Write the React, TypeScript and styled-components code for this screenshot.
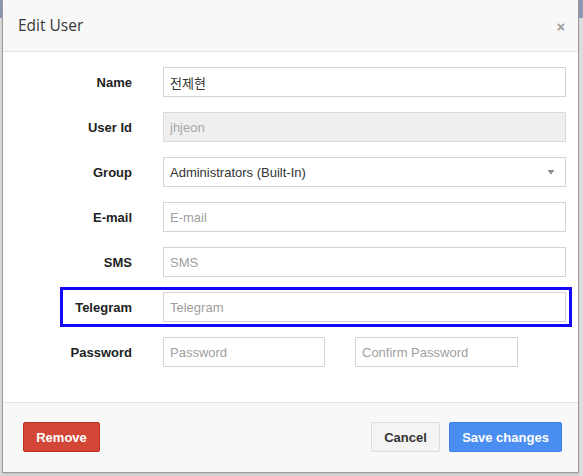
import React from "react";
import styled, { createGlobalStyle } from "styled-components";

const GlobalStyle = createGlobalStyle`
  html, body { margin: 0; padding: 0; }
  body {
    background: #e4e4e4;
    font-family: "Liberation Sans", Arial, sans-serif;
    font-size: 13px;
    color: #333;
  }
  * { box-sizing: border-box; }
`;

const Page = styled.div`
  width: 583px;
  height: 476px;
  padding-left: 2px;
  background: linear-gradient(to bottom, #8e9bb5 0, #8e9bb5 18px, #dedede 18px);
  overflow: hidden;
`;

const Dialog = styled.div`
  width: 577px;
  height: 473px;
  background: #fff;
  border: 1px solid #9c9c9c;
  border-top: none;
  display: flex;
  flex-direction: column;
  box-shadow: 0 2px 3px rgba(0, 0, 0, 0.12);
`;

const Header = styled.div`
  height: 52px;
  flex: none;
  background: #f8f8f8;
  border-bottom: 1px solid #e3e3e3;
  display: flex;
  align-items: center;
  justify-content: space-between;
  padding: 0 13px 2px 15px;
`;

const Title = styled.h4`
  margin: 0;
  font-family: "Open Sans", "Liberation Sans", sans-serif;
  font-size: 15.5px;
  font-weight: 500;
  color: #383838;
`;

const Close = styled.button`
  border: none;
  background: none;
  padding: 0;
  margin-top: 4px;
  font-family: "Liberation Sans", Arial, sans-serif;
  font-size: 14px;
  font-weight: bold;
  line-height: 1;
  color: #9a9a9a;
  cursor: pointer;
`;

const Body = styled.div`
  flex: 1;
  padding: 13px 9px 33px 60px;
  display: flex;
  flex-direction: column;
  gap: 11px;
`;

const Row = styled.div<{ $highlight?: boolean }>`
  display: flex;
  align-items: center;
  height: 34px;
  padding: 2px 3px 2px 0;
  outline: ${(p) => (p.$highlight ? "3px solid #1408f6" : "none")};
`;

const Label = styled.label`
  width: 69px;
  flex: none;
  text-align: right;
  font-weight: bold;
  font-size: 13px;
  color: #222;
  margin-right: 31px;
  white-space: nowrap;
`;

const Field = styled.div`
  flex: 1;
  display: flex;
  gap: 30px;
`;

const Input = styled.input<{ $width?: number }>`
  height: 30px;
  width: ${(p) => (p.$width ? `${p.$width}px` : "100%")};
  flex: ${(p) => (p.$width ? "none" : "1")};
  border: 1px solid #d4d4d4;
  border-radius: 0;
  padding: 0 6px;
  font-family: "Liberation Sans", "Noto Sans CJK KR", Arial, sans-serif;
  font-size: 13px;
  color: #333;
  background: #fff;
  outline: none;
  &::placeholder { color: #a0a0a0; }
  &:disabled {
    background: #efefef;
    color: #a8a8a8;
    border-color: #dadada;
  }
`;

const Select = styled.div`
  flex: 1;
  height: 30px;
  border: 1px solid #d4d4d4;
  display: flex;
  align-items: center;
  justify-content: space-between;
  padding: 0 10px 0 6px;
  font-size: 13px;
  color: #333;
`;

const Footer = styled.div`
  flex: none;
  height: 70px;
  background: #f8f8f8;
  border-top: 1px solid #e3e3e3;
  display: flex;
  align-items: center;
  justify-content: space-between;
  padding: 0 16px 1px 20px;
`;

const Actions = styled.div`
  display: flex;
  gap: 9px;
`;

const Button = styled.button<{ $variant: "danger" | "default" | "primary" }>`
  height: 30px;
  border-radius: 2px;
  padding: 0;
  white-space: nowrap;
  font-family: "Liberation Sans", Arial, sans-serif;
  font-size: 13px;
  font-weight: bold;
  cursor: pointer;
  ${(p) =>
    p.$variant === "danger"
      ? `background: #d34736; border: 1px solid #b8321f; color: #fff; width: 77px;`
      : p.$variant === "primary"
      ? `background: #4a8ef2; border: 1px solid #3d7fe6; color: #fff; width: 113px;`
      : `background: #f4f4f4; border: 1px solid #dcdcdc; color: #333; width: 69px;`}
`;

const Caret = () => (
  <svg width="8" height="6" viewBox="0 0 8 6">
    <path d="M0.5 1 L7.5 1 L4 5.5 Z" fill="#8a8a8a" />
  </svg>
);

export default function App() {
  return (
    <>
      <GlobalStyle />
      <Page>
        <Dialog>
          <Header>
            <Title>Edit User</Title>
            <Close aria-label="close">×</Close>
          </Header>
          <Body>
            <Row>
              <Label>Name</Label>
              <Field>
                <Input defaultValue="전제현" />
              </Field>
            </Row>
            <Row>
              <Label>User Id</Label>
              <Field>
                <Input defaultValue="jhjeon" disabled />
              </Field>
            </Row>
            <Row>
              <Label>Group</Label>
              <Field>
                <Select>
                  <span>Administrators (Built-In)</span>
                  <Caret />
                </Select>
              </Field>
            </Row>
            <Row>
              <Label>E-mail</Label>
              <Field>
                <Input placeholder="E-mail" />
              </Field>
            </Row>
            <Row>
              <Label>SMS</Label>
              <Field>
                <Input placeholder="SMS" />
              </Field>
            </Row>
            <Row $highlight>
              <Label>Telegram</Label>
              <Field>
                <Input placeholder="Telegram" />
              </Field>
            </Row>
            <Row>
              <Label>Password</Label>
              <Field>
                <Input type="password" placeholder="Password" $width={162} />
                <Input type="password" placeholder="Confirm Password" $width={163} />
              </Field>
            </Row>
          </Body>
          <Footer>
            <Button $variant="danger">Remove</Button>
            <Actions>
              <Button $variant="default">Cancel</Button>
              <Button $variant="primary">Save changes</Button>
            </Actions>
          </Footer>
        </Dialog>
      </Page>
    </>
  );
}
